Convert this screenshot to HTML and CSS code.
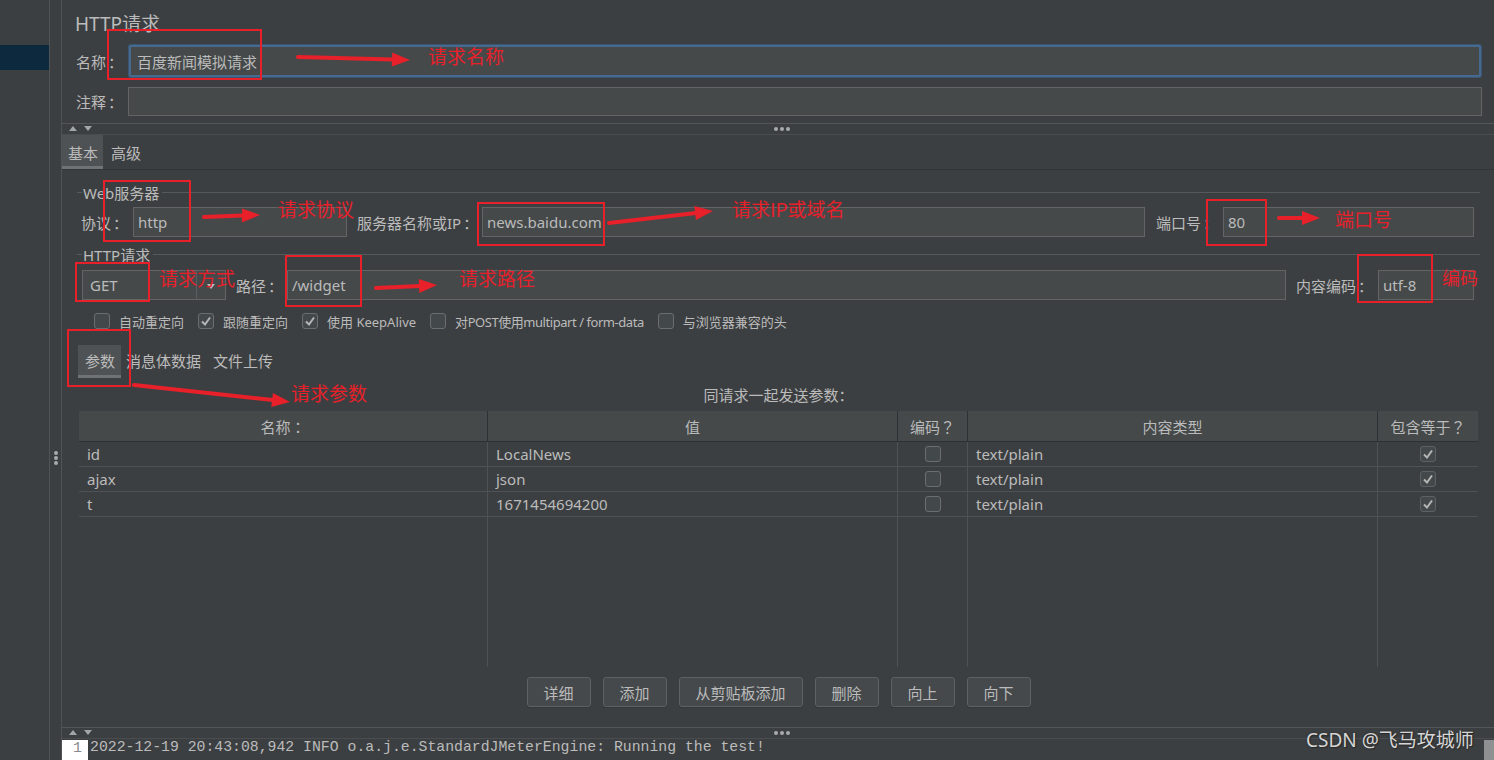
FILE: index.html
```html
<!DOCTYPE html>
<html lang="zh-CN">
<head>
<meta charset="utf-8">
<title>HTTP请求</title>
<link rel="stylesheet" href="styles.css">
</head>
<body>
<div class="app">
  <aside class="tree"><div class="tree-sel"></div></aside>
  <div class="vsplit"><span class="vdots"><i></i><i></i><i></i></span></div>
  <main class="main">
    <section class="head">
      <h1 class="title">HTTP请求</h1>
      <div class="frow name-row"><span class="lbl">名称<span class="co">：</span></span><div class="inp focus">百度新闻模拟请求</div></div>
      <div class="frow note-row"><span class="lbl">注释<span class="co">：</span></span><div class="inp"></div></div>
    </section>
    <div class="hsplit">
      <span class="tri"><svg width="24" height="6" viewBox="0 0 24 6"><polygon points="0,5 4,0 8,5" fill="#a3a6a8"/><polygon points="15,0 23,0 19,5" fill="#a3a6a8"/></svg></span>
      <span class="hdots"><i></i><i></i><i></i></span>
      <span></span>
    </div>
    <nav class="tabs"><span class="tab active">基本</span><span class="tab">高级</span></nav>
    <section class="content">
      <div class="group-title">Web服务器</div>
      <div class="frow srv-row">
        <span class="lbl l-proto">协议<span class="co">：</span></span><div class="inp w-proto">http</div>
        <span class="lbl l-host">服务器名称或IP<span class="co">：</span></span><div class="inp grow">news.baidu.com</div>
        <span class="lbl l-port">端口号<span class="co">：</span></span><div class="inp w-port">80</div>
      </div>
      <div class="group-title g2">HTTP请求</div>
      <div class="frow req-row">
        <div class="combo"><span class="combo-val">GET</span><span class="combo-btn"><svg width="8" height="5" viewBox="0 0 8 5"><polygon points="0,0 8,0 4,5" fill="#bbbbbb"/></svg></span></div>
        <span class="lbl l-path">路径<span class="co">：</span></span><div class="inp grow">/widget</div>
        <span class="lbl l-enc">内容编码<span class="co">：</span></span><div class="inp w-enc">utf-8</div>
      </div>
      <div class="checks">
        <span class="chk"><span class="box"></span>自动重定向</span>
        <span class="chk"><span class="box"><svg width="14" height="14" viewBox="0 0 14 14"><path d="M3 7.5 L6 10.5 L11 3.5" fill="none" stroke="#b5b5b5" stroke-width="2"/></svg></span>跟随重定向</span>
        <span class="chk"><span class="box"><svg width="14" height="14" viewBox="0 0 14 14"><path d="M3 7.5 L6 10.5 L11 3.5" fill="none" stroke="#b5b5b5" stroke-width="2"/></svg></span>使用 KeepAlive</span>
        <span class="chk narrow"><span class="box"></span>对POST使用multipart / form-data</span>
        <span class="chk"><span class="box"></span>与浏览器兼容的头</span>
      </div>
      <nav class="subtabs"><span class="stab active">参数</span><span class="stab s2">消息体数据</span><span class="stab s3">文件上传</span></nav>
      <div class="caption">同请求一起发送参数<span class="co">：</span></div>
      <div class="table">
        <div class="th">名称<span class="co">：</span></div><div class="th">值</div><div class="th">编码<span class="co">？</span></div><div class="th">内容类型</div><div class="th last">包含等于<span class="co">？</span></div>
        <div class="td">id</div><div class="td">LocalNews</div><div class="td c"><span class="box"></span></div><div class="td">text/plain</div><div class="td c last"><span class="box on"><svg width="14" height="14" viewBox="0 0 14 14"><path d="M3 7.5 L6 10.5 L11 3.5" fill="none" stroke="#b5b5b5" stroke-width="2"/></svg></span></div>
        <div class="td">ajax</div><div class="td">json</div><div class="td c"><span class="box"></span></div><div class="td">text/plain</div><div class="td c last"><span class="box on"><svg width="14" height="14" viewBox="0 0 14 14"><path d="M3 7.5 L6 10.5 L11 3.5" fill="none" stroke="#b5b5b5" stroke-width="2"/></svg></span></div>
        <div class="td">t</div><div class="td">1671454694200</div><div class="td c"><span class="box"></span></div><div class="td">text/plain</div><div class="td c last"><span class="box on"><svg width="14" height="14" viewBox="0 0 14 14"><path d="M3 7.5 L6 10.5 L11 3.5" fill="none" stroke="#b5b5b5" stroke-width="2"/></svg></span></div>
        <div class="tf"></div><div class="tf"></div><div class="tf"></div><div class="tf"></div><div class="tf last"></div>
      </div>
      <div class="buttons">
        <span class="btn">详细</span><span class="btn">添加</span><span class="btn wide">从剪贴板添加</span><span class="btn">删除</span><span class="btn">向上</span><span class="btn">向下</span>
      </div>
    </section>
    <div class="hsplit bottom">
      <span class="tri"><svg width="24" height="6" viewBox="0 0 24 6"><polygon points="0,5 4,0 8,5" fill="#a3a6a8"/><polygon points="15,0 23,0 19,5" fill="#a3a6a8"/></svg></span>
      <span class="hdots"><i></i><i></i><i></i></span>
      <span></span>
    </div>
    <div class="log"><span class="ln">1</span><span class="logtext">2022-12-19 20:43:08,942 INFO o.a.j.e.StandardJMeterEngine: Running the test!</span><span class="scroll"></span></div>
  </main>
</div>

<svg class="annot" width="1494" height="760" viewBox="0 0 1494 760">
  <g fill="none" stroke="#e8202a" stroke-width="2">
    <rect x="108" y="30" width="153" height="49"/>
    <rect x="104" y="181" width="86" height="60"/>
    <rect x="478" y="203" width="126" height="42"/>
    <rect x="1207" y="200" width="59" height="45"/>
    <rect x="76" y="263" width="73" height="38"/>
    <rect x="286" y="256" width="75" height="50"/>
    <rect x="1358" y="255" width="74" height="47"/>
    <rect x="68" y="330" width="62" height="56"/>
  </g>
  <g stroke="#e8202a" stroke-width="4" stroke-linecap="round">
    <line x1="298" y1="57" x2="393" y2="59.5"/>
    <line x1="204" y1="217" x2="243" y2="215.6"/>
    <line x1="609" y1="223" x2="696" y2="213"/>
    <line x1="1279" y1="218" x2="1303" y2="218"/>
    <line x1="376" y1="288" x2="420" y2="285.9"/>
    <line x1="134" y1="385" x2="273" y2="400"/>
  </g>
  <g fill="#e8202a">
    <polygon points="410,60 391.8,66.5 392.2,52.5"/>
    <polygon points="260,215 241.8,222.6 242.2,208.6"/>
    <polygon points="713,211 695.9,220 694.3,206.1"/>
    <polygon points="1320,218 1302,225 1302,211"/>
    <polygon points="437,285 419.3,292.9 418.7,278.9"/>
    <polygon points="290,402 271.3,407 272.9,393.1"/>
  </g>
</svg>
<span class="note n1">请求名称</span>
<span class="note n2">请求协议</span>
<span class="note n3">请求IP或域名</span>
<span class="note n4">端口号</span>
<span class="note n5">请求方式</span>
<span class="note n6">请求路径</span>
<span class="note n7">编码</span>
<span class="note n8">请求参数</span>
<div class="watermark">CSDN @飞马攻城师</div>
</body>
</html>
```
FILE: styles.css
```css
* { box-sizing: border-box; }
html, body { margin: 0; padding: 0; }
body {
  width: 1494px;
  height: 760px;
  overflow: hidden;
  background: #3c3f41;
  color: #bbbbbb;
  font-family: "Noto Sans", "Noto Sans CJK SC", sans-serif;
  font-size: 15px;
  position: relative;
}
.co { font-family: "Noto Sans CJK TC", "Noto Sans CJK SC", sans-serif; }
.lbl .co { margin-left: 2px; }
.app { display: flex; width: 1494px; height: 760px; }

.tree { width: 50px; flex: none; border-right: 1px solid #515457; padding-top: 45px; }
.tree-sel { height: 25px; background: #0d293e; }

.vsplit { width: 12px; flex: none; border-right: 1px solid #515457; padding-top: 451px; display: flex; justify-content: center; }
.vdots { display: flex; flex-direction: column; gap: 1px; }
.vdots i { width: 4px; height: 4px; border-radius: 50%; background: #a8abad; display: block; }

.main { flex: 1; min-width: 0; display: flex; flex-direction: column; }

.head { padding: 12px 12px 7px 14px; }
.title { margin: 0 0 0 -1px; font-size: 19px; font-weight: normal; line-height: 24px; height: 24px; color: #bbbbbb; }
.frow { display: flex; align-items: center; }
.name-row { margin-top: 9px; height: 32px; margin-right: 1px; }
.note-row { margin-top: 10px; height: 29px; }
.lbl { flex: none; white-space: nowrap; }
.head .lbl { width: 52px; }
.name-row .lbl { width: 53px; }
.inp {
  height: 100%;
  background: #45494a;
  border: 1px solid #646464;
  padding: 0 4px;
  display: flex;
  align-items: center;
  white-space: nowrap;
  flex: none;
}
.head .inp { flex: 1; }
.inp.focus { border: 2px solid #466a8f; border-radius: 2px; box-shadow: 0 0 0 1px #3a5673; padding-left: 6px; }

.hsplit {
  height: 12px;
  flex: none;
  border-top: 1px solid #535557;
  border-bottom: 1px solid #4a4d4f;
  display: grid;
  grid-template-columns: 1fr auto 1fr;
  align-items: center;
  padding-left: 7px;
}
.tri { display: flex; }
.hdots { display: flex; gap: 2px; }
.hdots i { width: 4px; height: 4px; border-radius: 50%; background: #a8abad; display: block; }

.tabs { height: 35px; flex: none; display: flex; border-bottom: 1px solid #323436; }
.tab { padding: 0 5px 0 6px; display: flex; align-items: center; border-bottom: 3px solid transparent; padding-top: 3px; }
.tab.active { background: #4e5254; border-bottom-color: #6f7377; }
.tab + .tab { margin-left: 2px; }

.content { flex: 1; display: flex; flex-direction: column; padding: 12px 14px 0 15px; }
.group-title { display: flex; align-items: center; height: 20px; }
.group-title::before { content: ""; width: 5px; height: 1px; background: #56595b; margin-right: 1px; }
.group-title::after { content: ""; flex: 1; height: 1px; background: #56595b; margin-left: 3px; }
.group-title.g2 { margin-top: 7px; }

.srv-row { margin-top: 5px; height: 30px; padding: 0 6px 0 4px; }
.l-proto { width: 52px; }
.w-proto { width: 214px; }
.l-host { width: 125px; margin-left: 10px; }
.grow { flex: 1; }
.l-port { width: 67px; margin-left: 11px; }
.w-port { width: 251px; }

.req-row { margin-top: 6px; height: 30px; padding: 0 6px 0 5px; }
.combo {
  width: 144px; height: 100%; flex: none;
  background: #45494a; border: 1px solid #646464;
  display: flex; align-items: center; justify-content: space-between;
}
.combo-val { padding-left: 7px; }
.combo-btn { width: 29px; height: 100%; border-left: 1px solid #5a5d5f; display: flex; align-items: center; justify-content: center; padding-top: 2px; }
.l-path { width: 51px; margin-left: 10px; }
.l-enc { width: 82px; margin-left: 10px; }
.w-enc { width: 96px; }

.checks { margin-top: 11px; height: 20px; display: flex; align-items: center; gap: 14px; padding-left: 17px; font-size: 13px; }
.chk { display: flex; align-items: center; gap: 9px; white-space: nowrap; }
.chk.narrow { letter-spacing: -0.45px; }
.box {
  width: 16px; height: 16px; flex: none;
  border: 1px solid #6b6e70; border-radius: 3px; background: #43494a;
  display: inline-flex; align-items: center; justify-content: center;
}

.subtabs { margin-top: 14px; height: 33px; display: flex; padding-left: 1px; }
.stab { display: flex; align-items: center; padding: 0 6px; border-bottom: 3px solid transparent; white-space: nowrap; }
.stab.active { background: #4e5254; border-bottom-color: #6f7377; padding: 0 6px 0 7px; }
.stab.s2 { padding-left: 5px; }

.caption { margin-top: 7px; height: 20px; line-height: 20px; text-align: center; font-size: 15px; }

.table {
  margin: 6px 2px 0;
  height: 256px;
  display: grid;
  grid-template-columns: 409px 410px 70px 410px 100px;
  grid-template-rows: 31px 25px 25px 25px 1fr;
}
.th {
  background: #45494a;
  border-right: 1px solid #2f3234;
  border-bottom: 1px solid #2e3032;
  display: flex; align-items: center; justify-content: center;
  white-space: nowrap;
}
.td {
  border-right: 1px solid #4f5254;
  border-bottom: 1px solid #4f5254;
  display: flex; align-items: center;
  padding-left: 8px;
  white-space: nowrap;
}
.td.c { justify-content: center; padding-left: 0; }
.tf { border-right: 1px solid #4f5254; }
.last { border-right: none; }
.box.on { border-color: #5e6163; }

.buttons { margin-top: 10px; height: 30px; display: flex; justify-content: center; gap: 12px; }
.btn {
  width: 64px; height: 30px;
  border: 1px solid #5e6163; border-radius: 3px;
  background: #45494b;
  box-shadow: 0 1px 0 #353739;
  display: flex; align-items: center; justify-content: center;
}
.btn.wide { width: 124px; }

.log { height: 21px; flex: none; display: flex; align-items: flex-start; background: #3c3f41; }
.ln { width: 26px; height: 20px; margin-top: 1px; background: #ffffff; color: #8a8a8a; text-align: right; padding-right: 6px; font-family: "Liberation Mono", monospace; font-size: 15px; line-height: 18px; }
.logtext { margin-left: 2px; font-family: "Liberation Mono", monospace; font-size: 14.8px; line-height: 17px; color: #bbbbbb; white-space: pre; flex: 1; }
.scroll { width: 10px; height: 20px; margin-top: 1px; background: #8e9092; }

.annot { position: absolute; left: 0; top: 0; pointer-events: none; }
.note { position: absolute; color: #e8202a; font-family: "Noto Sans CJK SC", sans-serif; font-size: 19px; line-height: 19px; white-space: nowrap; }
.n1 { left: 428px; top: 46px; }
.n2 { left: 278px; top: 199px; }
.n3 { left: 732px; top: 199px; }
.n4 { left: 1335px; top: 209px; }
.n5 { left: 159px; top: 268px; }
.n6 { left: 459px; top: 268px; }
.n7 { left: 1442px; top: 268px; font-size: 18px; }
.n8 { left: 291px; top: 383px; }

.watermark {
  position: absolute; left: 1306px; top: 728px;
  font-family: "Noto Sans", "Noto Sans CJK SC", sans-serif;
  font-size: 19px; line-height: 24px;
  color: #d6d6d6;
  text-shadow: 0 0 2px #2a2a2a, 1px 1px 1px #2a2a2a;
  white-space: nowrap;
}
```
